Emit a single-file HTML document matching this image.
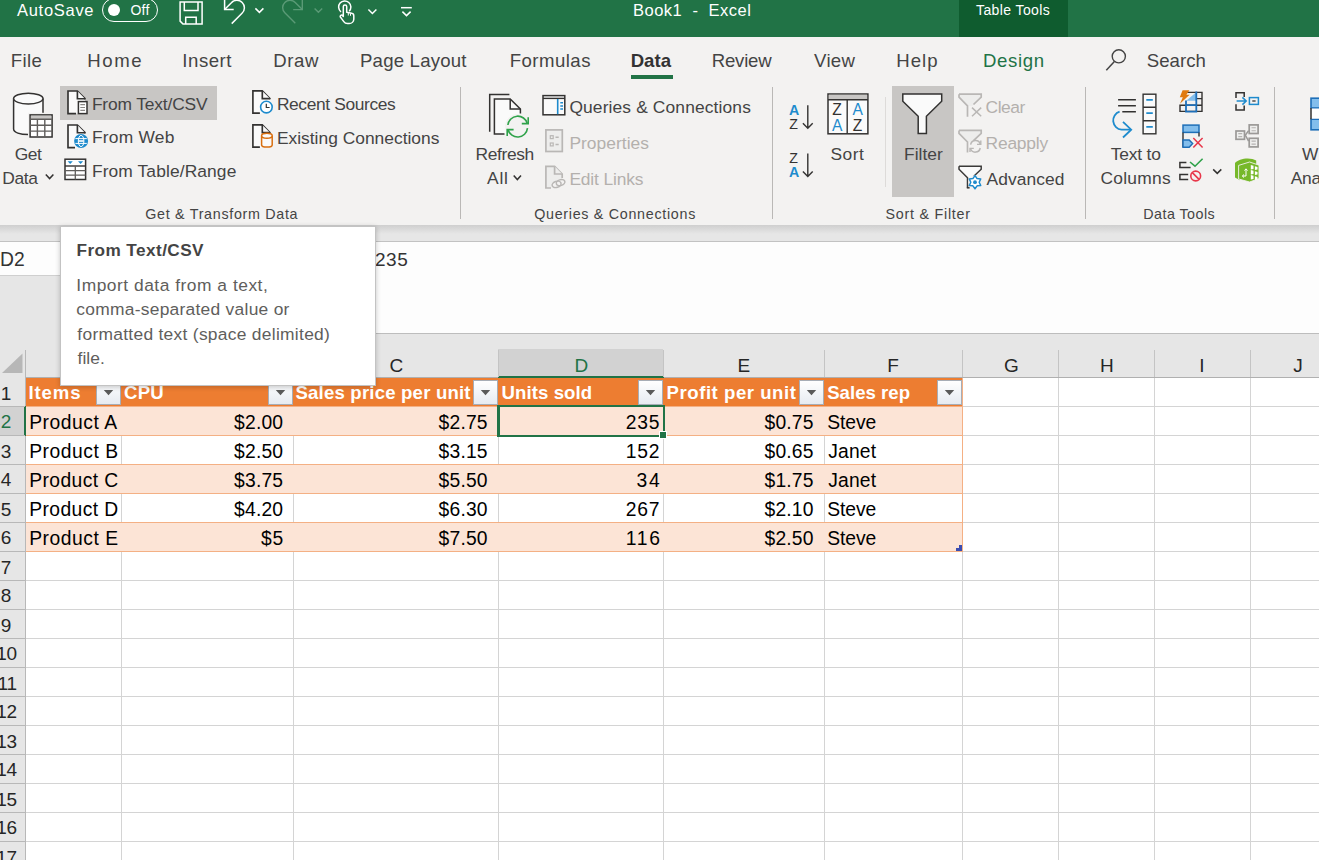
<!DOCTYPE html>
<html lang="en"><head><meta charset="utf-8"><title>Book1 - Excel</title>
<style>
html,body{margin:0;padding:0;}
body{width:1319px;height:860px;overflow:hidden;position:relative;background:#fff;font-family:"Liberation Sans", sans-serif;}
svg{position:absolute;overflow:visible;}
</style></head><body>
<div style="position:absolute;left:0px;top:0px;width:1319px;height:37px;background:#217346;"></div>
<div style="position:absolute;left:959px;top:0px;width:109px;height:37px;background:#0f5c2f;"></div>
<div style="position:absolute;left:102px;top:-2.5px;width:54.4px;height:22.3px;border:1.5px solid #fff;border-radius:13px"></div>
<div style="position:absolute;left:107.9px;top:3.8px;width:12.3px;height:12.3px;border-radius:50%;background:#fff"></div>
<svg style="left:0;top:0;" width="1319" height="37" viewBox="0 0 1319 37"><path d="M180.1 2.1 H202.1 V24 H183 L180.1 21.1 Z" stroke="#fff" fill="none" stroke-width="1.5"/><path d="M184.3 2.1 V10.4 H198 V2.1" stroke="#fff" fill="none" stroke-width="1.5"/><path d="M185.7 24 V17.3 H196.2 V24" stroke="#fff" fill="none" stroke-width="1.5"/><path d="M224.6 -2 V9.5 H233.7" stroke="#fff" fill="none" stroke-width="1.5"/><path d="M224.6 9.5 L231.4 2.7 A7.5 7.5 0 1 1 242 13.3 L231.7 23.6" stroke="#fff" fill="none" stroke-width="1.5"/><path d="M255.4 8.4 L259.4 12.4 L263.4 8.4" stroke="#fff" fill="none" stroke-width="1.5"/><path d="M302.3 -2 V9.6 H293.2" stroke="#5a9a76" fill="none" stroke-width="1.4"/><path d="M302.3 9.6 L295.2 2.5 A7.3 7.3 0 1 0 284.8 12.8 L295.3 23.3" stroke="#5a9a76" fill="none" stroke-width="1.4"/><path d="M314.6 8.4 L318.4 12.2 L322.2 8.4" stroke="#5a9a76" fill="none" stroke-width="1.4"/><path d="M341 11.8 A6.1 6.1 0 1 1 349.2 11.2" stroke="#fff" fill="none" stroke-width="1.5"/><path d="M343.3 16.5 V6.6 A1.7 1.7 0 0 1 346.7 6.6 V12.2 L351.7 13.3 A2.6 2.6 0 0 1 353.8 15.9 V19.2 A4.6 4.6 0 0 1 349.2 23.6 H347.5 A4.5 4.5 0 0 1 343.8 21.6 L340.2 16.8 A1.5 1.5 0 0 1 342.4 15.2 Z" stroke="#fff" fill="none" stroke-width="1.5" stroke-linejoin="round"/><path d="M348.3 13 V15.5 M350.5 13.5 V15.8" stroke="#fff" stroke-width="1" fill="none"/><path d="M368.4 9.5 L372.4 13.5 L376.4 9.5" stroke="#fff" fill="none" stroke-width="1.5"/><path d="M401 7.7 H411.8" stroke="#fff" fill="none" stroke-width="1.5"/><path d="M402.4 11.6 L406.5 15.6 L410.6 11.6" stroke="#fff" fill="none" stroke-width="1.5"/></svg>
<div style="position:absolute;left:0px;top:37px;width:1319px;height:188px;background:#f3f2f1;"></div>
<div style="position:absolute;left:630.7px;top:74.6px;width:42px;height:4.2px;background:#217346;"></div>
<div style="position:absolute;left:60px;top:86px;width:157px;height:34px;background:#c8c6c4;"></div>
<div style="position:absolute;left:892px;top:86px;width:62px;height:111px;background:#c8c6c4;"></div>
<div style="position:absolute;left:460px;top:87px;width:1px;height:132px;background:#bab8b6;"></div>
<div style="position:absolute;left:772px;top:87px;width:1px;height:132px;background:#bab8b6;"></div>
<div style="position:absolute;left:1085px;top:87px;width:1px;height:132px;background:#bab8b6;"></div>
<div style="position:absolute;left:1274px;top:87px;width:1px;height:132px;background:#bab8b6;"></div>
<div style="position:absolute;left:885px;top:96.5px;width:1px;height:90px;background:#dddbd9;"></div>
<svg style="left:0;top:0;" width="1319" height="230" viewBox="0 0 1319 230"><circle cx="1118.8" cy="56.3" r="6.6" stroke="#444" stroke-width="1.4" fill="none" /><path d="M1114.4 61.4 L1106.3 70.3" stroke="#444" stroke-width="1.5" fill="none" /><path d="M45.8 174.6 L49.599999999999994 178.6 L53.4 174.6" stroke="#333231" stroke-width="1.5" fill="none" /><path d="M513.7 175.4 L517.35 179.5 L521 175.4" stroke="#333231" stroke-width="1.5" fill="none" /><path d="M1213.2 169.4 L1217.25 173.4 L1221.3 169.4" stroke="#333231" stroke-width="1.5" fill="none" /><path d="M13.6 98.6 V129 C13.6 132.5 20 134.6 28.3 134.6 C36.6 134.6 43 132.5 43 129 V98.6" stroke="#333231" stroke-width="1.5" fill="#fafafa" /><ellipse cx="28.3" cy="98.6" rx="14.7" ry="5.4" stroke="#333231" stroke-width="1.5" fill="#fafafa" /><rect x="28" y="112.8" width="26.2" height="26.3" fill="#f3f2f1"/><rect x="30.1" y="114.9" width="22" height="22.1" stroke="#333231" stroke-width="1.5" fill="#fff" /><rect x="30.9" y="115.7" width="20.4" height="3.4" fill="#c8c6c4"/><path d="M30.1 119.3 H52.1 M30.1 125.2 H52.1 M30.1 131.1 H52.1 M37.4 119.3 V137 M44.8 119.3 V137" stroke="#605e5c" stroke-width="1.4" fill="none" /><path d="M68 91 H77.4 L85 98.7 V113.6 H68 Z" fill="#fafafa"/><path d="M76 113.6 H68 V91 H77.4 L85 98.7 V99.4" stroke="#333231" stroke-width="1.65" fill="#fafafa" /><path d="M77.4 91 V98.7 H85" stroke="#333231" stroke-width="1.65" fill="#fafafa" /><rect x="78.4" y="101.6" width="8.6" height="12" stroke="#333231" stroke-width="1.5" fill="#fff" /><path d="M80.3 104.6 H85 M80.3 107.5 H85 M80.3 110.4 H85" stroke="#8a8886" stroke-width="1.1" fill="none" /><path d="M68 125 H77.4 L85 132.7 V147.6 H68 Z" fill="#fafafa"/><path d="M75 147.6 H68 V125 H77.4 L85 132.7 V133.4" stroke="#333231" stroke-width="1.65" fill="#fafafa" /><path d="M77.4 125 V132.7 H85" stroke="#333231" stroke-width="1.65" fill="#fafafa" /><circle cx="81.1" cy="141" r="7" fill="#1e8bcd"/><ellipse cx="81.1" cy="141" rx="2.8" ry="5.6" stroke="#fff" stroke-width="1" fill="none" /><path d="M75.4 138.6 H86.8 M75.4 143.4 H86.8" stroke="#fff" stroke-width="1" fill="none" /><path d="M78.5 141 H83.7" stroke="#fff" stroke-width="1.6" fill="none" /><rect x="65" y="159.2" width="20.6" height="20.3" stroke="#333231" stroke-width="1.5" fill="#fff" /><path d="M65 166 H85.6" stroke="#333231" stroke-width="1.4" fill="none" /><path d="M65 170.7 H85.6 M65 175.1 H85.6 M75.3 166 V179.5" stroke="#605e5c" stroke-width="1.3" fill="none" /><path d="M67.6 161.3 H72.8 L70.2 164 Z M78 161.3 H83.2 L80.6 164 Z" fill="#1e8bcd"/><path d="M253.2 91.2 H262.6 L270.2 98.9 V113.6 H253.2 Z" fill="#fafafa"/><path d="M259.9 113.10000000000001 H252.9 V90.9 H262.3 L269.9 98.60000000000001 V99.30000000000001" stroke="#333231" stroke-width="1.65" fill="#fafafa" /><path d="M262.3 90.9 V98.60000000000001 H269.9" stroke="#333231" stroke-width="1.65" fill="#fafafa" /><circle cx="266.4" cy="107.1" r="5.8" stroke="#1e8bcd" stroke-width="1.6" fill="#fff" /><path d="M266.3 103.8 V107.5 H269.6" stroke="#333231" stroke-width="1.2" fill="none" /><path d="M253.2 125.2 H262.6 L270.2 132.9 V147.6 H253.2 Z" fill="#fafafa"/><path d="M259.9 147.1 H252.9 V124.9 H262.3 L269.9 132.6 V133.3" stroke="#333231" stroke-width="1.65" fill="#fafafa" /><path d="M262.3 124.9 V132.6 H269.9" stroke="#333231" stroke-width="1.65" fill="#fafafa" /><path d="M261.6 135.8 V145 C261.6 146.4 264 147.1 266.9 147.1 C269.8 147.1 272.2 146.4 272.2 145 V135.8" stroke="#d86f10" stroke-width="1.5" fill="#fafafa" /><ellipse cx="266.9" cy="135.8" rx="5.3" ry="2.5" stroke="#d86f10" stroke-width="1.5" fill="#fafafa" /><path d="M509.4 94.4 H489.7 V131.8" stroke="#333231" stroke-width="1.5" fill="none" /><path d="M494.4 98.9 H510.2 L520.4 109 V134 H494.4 Z" fill="#fafafa"/><path d="M504.5 134 H494.4 V98.9 H510.2 L520.4 109 V113.5" stroke="#333231" stroke-width="1.5" fill="none" /><path d="M510.2 98.9 V109 H520.4" stroke="#333231" stroke-width="1.5" fill="none" /><circle cx="517.7" cy="126.6" r="12.6" fill="#f3f2f1"/><path d="M507.9 125 A9.9 9.9 0 0 1 527.3 123.5" stroke="#2fa24a" stroke-width="1.6" fill="none" /><path d="M528.2 117.2 V123.6 H521.8" stroke="#2fa24a" stroke-width="1.6" fill="none" /><path d="M527.5 128.2 A9.9 9.9 0 0 1 508.1 129.7" stroke="#2fa24a" stroke-width="1.6" fill="none" /><path d="M507.2 136 V129.6 H513.6" stroke="#2fa24a" stroke-width="1.6" fill="none" /><rect x="543" y="95.6" width="21.8" height="19.2" stroke="#333231" stroke-width="1.5" fill="#fafafa" /><path d="M543 98.4 H564.8" stroke="#333231" stroke-width="1.4" fill="none" /><path d="M557.7 99 V114.2" stroke="#1e8bcd" stroke-width="1.6" fill="none" /><path d="M560.3 102.8 H563 M560.3 105.9 H563 M560.3 109 H563" stroke="#1e8bcd" stroke-width="1.5" fill="none" /><rect x="545.9" y="129.9" width="16.4" height="21.6" stroke="#b9b7b5" stroke-width="1.7" fill="#ededec" /><rect x="550.3" y="135.7" width="2.9" height="2.9" stroke="#b9b7b5" stroke-width="1.2" fill="none" /><rect x="550.3" y="143" width="2.9" height="2.9" stroke="#b9b7b5" stroke-width="1.2" fill="none" /><path d="M555.5 137.2 H558.7 M555.5 144.5 H558.7" stroke="#b9b7b5" stroke-width="1.4" fill="none" /><path d="M551 188 H545.9 V166.3 H554.6 L562.2 174 V178" stroke="#b9b7b5" stroke-width="1.7" fill="#ededec" /><path d="M554.6 166.3 V174 H562.2" stroke="#b9b7b5" stroke-width="1.7" fill="#ededec" /><ellipse cx="556.6" cy="184.4" rx="4.6" ry="3" transform="rotate(-18 556.6 184.4)" stroke="#b9b7b5" stroke-width="1.5" fill="#f3f2f1" /><ellipse cx="560.6" cy="182.6" rx="4.4" ry="2.9" transform="rotate(-18 560.6 182.6)" stroke="#b9b7b5" stroke-width="1.5" fill="none" /><path d="M807.8 105.2 V128.6 M802.9 123.3 L807.8 128.29999999999998 L812.6999999999999 123.3" stroke="#333231" stroke-width="1.4" fill="none" /><path d="M807.8 153.4 V176.8 M802.9 171.5 L807.8 176.5 L812.6999999999999 171.5" stroke="#333231" stroke-width="1.4" fill="none" /><text x="794.2" y="115.4" font-family="Liberation Sans, sans-serif" font-size="14.2" font-weight="bold" fill="#1e8bcd" text-anchor="middle">A</text><text x="793.6" y="128.7" font-family="Liberation Sans, sans-serif" font-size="14.2" font-weight="normal" fill="#333231" text-anchor="middle">Z</text><text x="793.6" y="163.4" font-family="Liberation Sans, sans-serif" font-size="14.2" font-weight="normal" fill="#333231" text-anchor="middle">Z</text><text x="794.2" y="176.8" font-family="Liberation Sans, sans-serif" font-size="14.2" font-weight="bold" fill="#1e8bcd" text-anchor="middle">A</text><rect x="828" y="94" width="39.9" height="39.8" stroke="#333231" stroke-width="1.5" fill="#fafafa" /><rect x="828.8" y="94.8" width="38.3" height="4.6" fill="#c8c6c4"/><path d="M828 99.8 H867.9 M847.2 99.8 V133.8" stroke="#333231" stroke-width="1.4" fill="none" /><text x="837.1" y="115" font-family="Liberation Sans, sans-serif" font-size="15.6" font-weight="normal" fill="#333231" text-anchor="middle">Z</text><text x="837.1" y="130.7" font-family="Liberation Sans, sans-serif" font-size="15.6" font-weight="normal" fill="#1e8bcd" text-anchor="middle">A</text><text x="857.6" y="115" font-family="Liberation Sans, sans-serif" font-size="15.6" font-weight="normal" fill="#1e8bcd" text-anchor="middle">A</text><text x="857.6" y="130.7" font-family="Liberation Sans, sans-serif" font-size="15.6" font-weight="normal" fill="#333231" text-anchor="middle">Z</text><path d="M902.8 94 H941.7 V101.3 L926.4 116.3 V133.6 H918.2 V116.3 L902.8 101.3 Z" stroke="#323130" stroke-width="1.5" fill="#fafafa" /><path d="M959 94.2 H981.2 V97.2 L972 106 H967.5 L959 97.2 Z" fill="#ededec"/><path d="M959 94.2 H981.2 V97.2 L973.5 104.5 M967.5 116.7 V105.8 L959 97.2 V94.2" stroke="#b9b7b5" stroke-width="1.7" fill="none" /><path d="M972 107.6 L981.2 116.2 M981.2 107.6 L972 116.2" stroke="#b9b7b5" stroke-width="1.5" fill="none" /><path d="M959 130.4 H981.2 V133.4 L972 142 H967.5 L959 133.4 Z" fill="#ededec"/><path d="M959 130.4 H981.2 V133.4 L973.5 140.70000000000002 M967.5 152.4 V142.0 L959 133.4 V130.4" stroke="#b9b7b5" stroke-width="1.7" fill="none" /><path d="M970.6 144.6 A5 5 0 0 1 980.3 144.2 M980.2 148 A5 5 0 0 1 970.5 148.6" stroke="#b9b7b5" stroke-width="1.5" fill="none" /><path d="M980.8 140.6 V144.4 H977 M970 152 V148.4 H973.8" stroke="#b9b7b5" stroke-width="1.4" fill="none" /><path d="M959 166.2 H981.2 V169.2 L972 178 H967.5 L959 169.2 Z" fill="#fafafa"/><path d="M959 166.2 H981.2 V169.2 L973.5 176.5 M967.5 187.79999999999998 V177.79999999999998 L959 169.2 V166.2" stroke="#3b3a39" stroke-width="1.5" fill="none" /><path d="M966.8 187.8 H969.6" stroke="#323130" stroke-width="1.5" fill="none" /><circle cx="975.3" cy="182.2" r="7" fill="#f3f2f1"/><polygon points="975.00,175.60 977.10,178.56 980.72,178.90 979.20,182.20 980.72,185.50 977.10,185.84 975.00,188.80 972.90,185.84 969.28,185.50 970.80,182.20 969.28,178.90 972.90,178.56" stroke="#1e8bcd" stroke-width="1.5" fill="#fff" stroke-linejoin='round'/><circle cx="975" cy="182.2" r="1.9" fill="#1e8bcd"/><path d="M1118.1 99.8 H1135.9 M1118.1 105.8 H1135.9 M1122.3 111.8 H1135.9" stroke="#333231" stroke-width="1.5" fill="none" /><rect x="1143.1" y="94.2" width="12.8" height="39.6" stroke="#333231" stroke-width="1.4" fill="#fafafa" /><path d="M1143.1 107.3 H1155.9 M1143.1 120.7 H1155.9" stroke="#333231" stroke-width="1.4" fill="none" /><path d="M1146.3 99.9 H1152.8 M1146.3 113.1 H1152.8 M1146.3 126.9 H1152.8" stroke="#1e8bcd" stroke-width="1.6" fill="none" /><path d="M1119.6 111.6 A9.3 9.3 0 0 0 1121.6 129.7 H1131" stroke="#1e8bcd" stroke-width="1.8" fill="none" /><path d="M1123 121.8 L1131.2 129.7 L1123 137.5" stroke="#1e8bcd" stroke-width="1.8" fill="none" /><path d="M1186 92.4 H1202 V111.4 H1180 V105.2 H1202 M1202 98.6 H1196.4 M1180 105.2 V111.4" stroke="#333231" stroke-width="1.4" fill="none" /><path d="M1196.3 92.2 L1186.2 100.8 H1196.3 Z" fill="#83beec"/><path d="M1196.3 91.6 V111.6 H1186 V100.6 M1186 105.2 H1196.3" stroke="#1e6fb8" stroke-width="1.8" fill="none" /><path d="M1182.6 90.2 H1189.4 L1186.4 94.8 H1189.6 L1180 103.8 L1182.8 97.2 H1179.8 Z" fill="#e07a10"/><rect x="1183" y="125.1" width="16" height="7.3" stroke="#1e6fb8" stroke-width="1.5" fill="#83beec" /><path d="M1183 132.4 V147.2 M1199 132.4 V136.5" stroke="#333231" stroke-width="1.4" fill="none" /><path d="M1183 140 H1189.2 L1192.6 143.6 L1189.2 147.2 H1183 Z" stroke="#1e6fb8" stroke-width="1.5" fill="#83beec" /><path d="M1193.3 138 L1202.6 147.6 M1202.6 138 L1193.3 147.6" stroke="#e8374a" stroke-width="1.5" fill="none" /><path d="M1186.4 162.4 H1179.9 V167.6 H1190.6 M1188.2 174.4 H1179.9 V179.6 H1188.2" stroke="#333231" stroke-width="1.5" fill="none" /><path d="M1190 162 L1195 166.2 L1202.6 158.8" stroke="#2fa24a" stroke-width="1.6" fill="none" /><circle cx="1195.7" cy="176" r="4.9" stroke="#e8374a" stroke-width="1.6" fill="none" /><path d="M1192.3 172.6 L1199.1 179.4" stroke="#e8374a" stroke-width="1.6" fill="none" /><path d="M1236 98 V92.8 H1244.2 V97 M1236 104.2 V110 H1244.2 V105.4" stroke="#333231" stroke-width="1.5" fill="none" /><path d="M1236.6 101 H1246 M1242.4 97.4 L1246.2 101 L1242.4 104.6" stroke="#1e8bcd" stroke-width="1.5" fill="none" /><rect x="1249.4" y="97.6" width="9" height="6.8" stroke="#1e8bcd" stroke-width="1.5" fill="none" /><path d="M1252.3 101 H1255.6" stroke="#333231" stroke-width="1.3" fill="none" /><path d="M1245.3 135.2 L1248.6 130.6 M1245.3 135.2 L1248.6 141.2" stroke="#9b9997" stroke-width="1.5" fill="none" /><rect x="1236" y="131" width="8.5" height="8.3" stroke="#9b9997" stroke-width="1.7" fill="#efefee" /><path d="M1238.3 133.65 H1242.2 M1238.3 136.65 H1242.2" stroke="#b5b3b1" stroke-width="1.1" fill="none" /><rect x="1249.2" y="124.9" width="8.9" height="8.6" stroke="#9b9997" stroke-width="1.7" fill="#efefee" /><path d="M1251.5 127.70000000000002 H1255.8000000000002 M1251.5 130.70000000000002 H1255.8000000000002" stroke="#b5b3b1" stroke-width="1.1" fill="none" /><rect x="1249.2" y="138.3" width="8.9" height="8.6" stroke="#9b9997" stroke-width="1.7" fill="#efefee" /><path d="M1251.5 141.10000000000002 H1255.8000000000002 M1251.5 144.10000000000002 H1255.8000000000002" stroke="#b5b3b1" stroke-width="1.1" fill="none" /><path d="M1235 163 C1238.5 158.4 1250.5 156.6 1256.2 160.6 V165 H1240 V180.2 L1235 177.6 Z" fill="#76b82a"/><path d="M1238.6 165.4 L1249.6 162 L1259 165.2 V178.6 L1249.6 182 L1238.6 179 Z" fill="#76b82a" stroke="#f3f2f1" stroke-width="0.9"/><path d="M1250.8 165.0 l2.7 0.8 v3.1 l-2.7 0.5 z M1254.9 166.2 l2.6 0.7 v2.7 l-2.6 0.5 z M1250.8 170.0 l2.7 0.8 v3.1 l-2.7 0.5 z M1254.9 171.2 l2.6 0.7 v2.7 l-2.6 0.5 z M1250.8 175.0 l2.7 0.8 v3.1 l-2.7 0.5 z M1254.9 176.2 l2.6 0.7 v2.7 l-2.6 0.5 z " fill="#fff"/><path d="M1242.6 176 H1246 V169 M1244.5 170.6 L1246 168.8 L1247.5 170.6 M1244 174.5 L1242.3 176 L1244 177.5" stroke="#fff" stroke-width="1" fill="none" /><rect x="1311" y="98.2" width="14" height="9.8" stroke="#1e6fb8" stroke-width="1.6" fill="#83beec" /><rect x="1311" y="119.2" width="14" height="10.6" stroke="#1e6fb8" stroke-width="1.6" fill="#83beec" /><rect x="1311" y="108.6" width="14" height="10" fill="#fff"/><path d="M1311 108 V119.2" stroke="#333231" stroke-width="1.5" fill="none" /></svg>
<div style="position:absolute;left:0px;top:225px;width:1319px;height:152px;background:#e6e6e6;"></div>
<div style="position:absolute;left:0;top:225px;width:1319px;height:9px;background:linear-gradient(#cfcfcf,#e6e6e6)"></div>
<div style="position:absolute;left:0px;top:241px;width:140px;height:35px;background:#fdfdfd;border-top:1px solid #c2c2c2;border-bottom:1px solid #cfcfcf;box-sizing:border-box"></div>
<div style="position:absolute;left:300px;top:241px;width:1019px;height:93px;background:#fdfdfd;border-top:1px solid #c2c2c2;border-bottom:1px solid #bdbdbd;box-sizing:border-box"></div>
<div style="position:absolute;left:25px;top:377px;width:1294px;height:483px;background:#fff;"></div>
<div style="position:absolute;left:498px;top:349px;width:165px;height:27px;background:#d2d2d2;"></div>
<div style="position:absolute;left:498px;top:376px;width:166px;height:2px;background:#217346;"></div>
<div style="position:absolute;left:121px;top:350px;width:1px;height:27px;background:#c4c4c4;"></div>
<div style="position:absolute;left:293px;top:350px;width:1px;height:27px;background:#c4c4c4;"></div>
<div style="position:absolute;left:498px;top:350px;width:1px;height:27px;background:#c4c4c4;"></div>
<div style="position:absolute;left:663px;top:350px;width:1px;height:27px;background:#c4c4c4;"></div>
<div style="position:absolute;left:824px;top:350px;width:1px;height:27px;background:#c4c4c4;"></div>
<div style="position:absolute;left:962px;top:350px;width:1px;height:27px;background:#c4c4c4;"></div>
<div style="position:absolute;left:1058px;top:350px;width:1px;height:27px;background:#c4c4c4;"></div>
<div style="position:absolute;left:1154px;top:350px;width:1px;height:27px;background:#c4c4c4;"></div>
<div style="position:absolute;left:1250px;top:350px;width:1px;height:27px;background:#c4c4c4;"></div>
<div style="position:absolute;left:0px;top:377px;width:498px;height:1px;background:#b0b0b0;"></div>
<div style="position:absolute;left:664px;top:377px;width:700px;height:1px;background:#b0b0b0;"></div>
<svg style="left:0;top:349px" width="25" height="28"><polygon points="22.5,4.5 22.5,24 2,24" fill="#b7b7b7"/></svg>
<div style="position:absolute;left:0px;top:377px;width:25px;height:483px;background:#e6e6e6;"></div>
<div style="position:absolute;left:0px;top:406px;width:25px;height:29px;background:#d2d2d2;"></div>
<div style="position:absolute;left:25px;top:350px;width:1px;height:510px;background:#b8b8b8;"></div>
<div style="position:absolute;left:24px;top:406px;width:2px;height:30px;background:#217346;"></div>
<div style="position:absolute;left:0px;top:406px;width:25px;height:1px;background:#b8b8b8;"></div>
<div style="position:absolute;left:0px;top:435px;width:25px;height:1px;background:#b8b8b8;"></div>
<div style="position:absolute;left:0px;top:464px;width:25px;height:1px;background:#b8b8b8;"></div>
<div style="position:absolute;left:0px;top:493px;width:25px;height:1px;background:#b8b8b8;"></div>
<div style="position:absolute;left:0px;top:522px;width:25px;height:1px;background:#b8b8b8;"></div>
<div style="position:absolute;left:0px;top:551px;width:25px;height:1px;background:#b8b8b8;"></div>
<div style="position:absolute;left:0px;top:580px;width:25px;height:1px;background:#b8b8b8;"></div>
<div style="position:absolute;left:0px;top:609px;width:25px;height:1px;background:#b8b8b8;"></div>
<div style="position:absolute;left:0px;top:638px;width:25px;height:1px;background:#b8b8b8;"></div>
<div style="position:absolute;left:0px;top:667px;width:25px;height:1px;background:#b8b8b8;"></div>
<div style="position:absolute;left:0px;top:696px;width:25px;height:1px;background:#b8b8b8;"></div>
<div style="position:absolute;left:0px;top:725px;width:25px;height:1px;background:#b8b8b8;"></div>
<div style="position:absolute;left:0px;top:754px;width:25px;height:1px;background:#b8b8b8;"></div>
<div style="position:absolute;left:0px;top:783px;width:25px;height:1px;background:#b8b8b8;"></div>
<div style="position:absolute;left:0px;top:812px;width:25px;height:1px;background:#b8b8b8;"></div>
<div style="position:absolute;left:0px;top:841px;width:25px;height:1px;background:#b8b8b8;"></div>
<div style="position:absolute;left:0px;top:870px;width:25px;height:1px;background:#b8b8b8;"></div>
<div style="position:absolute;left:26px;top:406px;width:1293px;height:1px;background:#d4d4d4;"></div>
<div style="position:absolute;left:26px;top:435px;width:1293px;height:1px;background:#d4d4d4;"></div>
<div style="position:absolute;left:26px;top:464px;width:1293px;height:1px;background:#d4d4d4;"></div>
<div style="position:absolute;left:26px;top:493px;width:1293px;height:1px;background:#d4d4d4;"></div>
<div style="position:absolute;left:26px;top:522px;width:1293px;height:1px;background:#d4d4d4;"></div>
<div style="position:absolute;left:26px;top:551px;width:1293px;height:1px;background:#d4d4d4;"></div>
<div style="position:absolute;left:26px;top:580px;width:1293px;height:1px;background:#d4d4d4;"></div>
<div style="position:absolute;left:26px;top:609px;width:1293px;height:1px;background:#d4d4d4;"></div>
<div style="position:absolute;left:26px;top:638px;width:1293px;height:1px;background:#d4d4d4;"></div>
<div style="position:absolute;left:26px;top:667px;width:1293px;height:1px;background:#d4d4d4;"></div>
<div style="position:absolute;left:26px;top:696px;width:1293px;height:1px;background:#d4d4d4;"></div>
<div style="position:absolute;left:26px;top:725px;width:1293px;height:1px;background:#d4d4d4;"></div>
<div style="position:absolute;left:26px;top:754px;width:1293px;height:1px;background:#d4d4d4;"></div>
<div style="position:absolute;left:26px;top:783px;width:1293px;height:1px;background:#d4d4d4;"></div>
<div style="position:absolute;left:26px;top:812px;width:1293px;height:1px;background:#d4d4d4;"></div>
<div style="position:absolute;left:26px;top:841px;width:1293px;height:1px;background:#d4d4d4;"></div>
<div style="position:absolute;left:26px;top:870px;width:1293px;height:1px;background:#d4d4d4;"></div>
<div style="position:absolute;left:121px;top:378px;width:1px;height:482px;background:#d4d4d4;"></div>
<div style="position:absolute;left:293px;top:378px;width:1px;height:482px;background:#d4d4d4;"></div>
<div style="position:absolute;left:498px;top:378px;width:1px;height:482px;background:#d4d4d4;"></div>
<div style="position:absolute;left:663px;top:378px;width:1px;height:482px;background:#d4d4d4;"></div>
<div style="position:absolute;left:824px;top:378px;width:1px;height:482px;background:#d4d4d4;"></div>
<div style="position:absolute;left:962px;top:378px;width:1px;height:482px;background:#d4d4d4;"></div>
<div style="position:absolute;left:1058px;top:378px;width:1px;height:482px;background:#d4d4d4;"></div>
<div style="position:absolute;left:1154px;top:378px;width:1px;height:482px;background:#d4d4d4;"></div>
<div style="position:absolute;left:1250px;top:378px;width:1px;height:482px;background:#d4d4d4;"></div>
<div style="position:absolute;left:26px;top:378px;width:936px;height:28px;background:#ed7d31;"></div>
<div style="position:absolute;left:26px;top:407px;width:936px;height:28px;background:#fce4d6;"></div>
<div style="position:absolute;left:26px;top:465px;width:936px;height:28px;background:#fce4d6;"></div>
<div style="position:absolute;left:26px;top:523px;width:936px;height:28px;background:#fce4d6;"></div>
<div style="position:absolute;left:26px;top:406px;width:937px;height:1px;background:#f4b084;"></div>
<div style="position:absolute;left:26px;top:435px;width:937px;height:1px;background:#f4b084;"></div>
<div style="position:absolute;left:26px;top:464px;width:937px;height:1px;background:#f4b084;"></div>
<div style="position:absolute;left:26px;top:493px;width:937px;height:1px;background:#f4b084;"></div>
<div style="position:absolute;left:26px;top:522px;width:937px;height:1px;background:#f4b084;"></div>
<div style="position:absolute;left:26px;top:551px;width:937px;height:1px;background:#f4b084;"></div>
<div style="position:absolute;left:962px;top:378px;width:1px;height:174px;background:#f4b084;"></div>
<div style="position:absolute;left:96px;top:380px;width:25px;height:25px;box-sizing:border-box;border:1px solid #a7adb6;background:linear-gradient(#ffffff,#f4f6f9 45%,#e7ebf1)"></div>
<svg style="left:96px;top:380px" width="25" height="25"><polygon points="7.8,9.9 17.2,9.9 12.5,15.3" fill="#5a5a5a"/></svg>
<div style="position:absolute;left:268px;top:380px;width:25px;height:25px;box-sizing:border-box;border:1px solid #a7adb6;background:linear-gradient(#ffffff,#f4f6f9 45%,#e7ebf1)"></div>
<svg style="left:268px;top:380px" width="25" height="25"><polygon points="7.8,9.9 17.2,9.9 12.5,15.3" fill="#5a5a5a"/></svg>
<div style="position:absolute;left:473px;top:380px;width:25px;height:25px;box-sizing:border-box;border:1px solid #a7adb6;background:linear-gradient(#ffffff,#f4f6f9 45%,#e7ebf1)"></div>
<svg style="left:473px;top:380px" width="25" height="25"><polygon points="7.8,9.9 17.2,9.9 12.5,15.3" fill="#5a5a5a"/></svg>
<div style="position:absolute;left:638px;top:380px;width:25px;height:25px;box-sizing:border-box;border:1px solid #a7adb6;background:linear-gradient(#ffffff,#f4f6f9 45%,#e7ebf1)"></div>
<svg style="left:638px;top:380px" width="25" height="25"><polygon points="7.8,9.9 17.2,9.9 12.5,15.3" fill="#5a5a5a"/></svg>
<div style="position:absolute;left:799px;top:380px;width:25px;height:25px;box-sizing:border-box;border:1px solid #a7adb6;background:linear-gradient(#ffffff,#f4f6f9 45%,#e7ebf1)"></div>
<svg style="left:799px;top:380px" width="25" height="25"><polygon points="7.8,9.9 17.2,9.9 12.5,15.3" fill="#5a5a5a"/></svg>
<div style="position:absolute;left:937px;top:380px;width:25px;height:25px;box-sizing:border-box;border:1px solid #a7adb6;background:linear-gradient(#ffffff,#f4f6f9 45%,#e7ebf1)"></div>
<svg style="left:937px;top:380px" width="25" height="25"><polygon points="7.8,9.9 17.2,9.9 12.5,15.3" fill="#5a5a5a"/></svg>
<div style="position:absolute;left:497px;top:405px;width:168px;height:32px;box-sizing:border-box;border:2px solid #217346;border-left-width:3px"></div>
<div style="position:absolute;left:659px;top:431px;width:8px;height:8px;background:#fff;"></div>
<div style="position:absolute;left:660px;top:432px;width:6px;height:6px;background:#217346;"></div>
<div style="position:absolute;left:959px;top:545px;width:3px;height:6px;background:#3b4db1;"></div>
<div style="position:absolute;left:956px;top:548px;width:6px;height:3px;background:#3b4db1;"></div>
<div style="position:absolute;left:60.3px;top:226.3px;width:316px;height:159.5px;box-sizing:border-box;background:#fff;border:1px solid #c3c3c3;box-shadow:0 1px 5px rgba(0,0,0,.22);z-index:10"></div>
<div style="position:absolute;left:17.00px;top:1px;font-size:16.5px;line-height:18px;color:#fff;font-weight:normal;letter-spacing:0.714px;white-space:pre;">AutoSave</div>
<div style="position:absolute;left:130.40px;top:2px;font-size:14px;line-height:16px;color:#fff;font-weight:normal;letter-spacing:0.250px;white-space:pre;">Off</div>
<div style="position:absolute;left:633.00px;top:1px;font-size:16.5px;line-height:18px;color:#fff;font-weight:normal;letter-spacing:0.500px;white-space:pre;">Book1  -  Excel</div>
<div style="position:absolute;left:976.00px;top:2px;font-size:14px;line-height:16px;color:#fff;font-weight:normal;letter-spacing:0.400px;white-space:pre;">Table Tools</div>
<div style="position:absolute;left:10.70px;top:50px;font-size:18.6px;line-height:21px;color:#444;font-weight:normal;letter-spacing:0.433px;white-space:pre;">File</div>
<div style="position:absolute;left:87.30px;top:50px;font-size:18.6px;line-height:21px;color:#444;font-weight:normal;letter-spacing:1.567px;white-space:pre;">Home</div>
<div style="position:absolute;left:182.30px;top:50px;font-size:18.6px;line-height:21px;color:#444;font-weight:normal;letter-spacing:0.540px;white-space:pre;">Insert</div>
<div style="position:absolute;left:273.30px;top:50px;font-size:18.6px;line-height:21px;color:#444;font-weight:normal;letter-spacing:0.567px;white-space:pre;">Draw</div>
<div style="position:absolute;left:360.00px;top:50px;font-size:18.6px;line-height:21px;color:#444;font-weight:normal;letter-spacing:0.200px;white-space:pre;">Page Layout</div>
<div style="position:absolute;left:509.70px;top:50px;font-size:18.6px;line-height:21px;color:#444;font-weight:normal;letter-spacing:0.471px;white-space:pre;">Formulas</div>
<div style="position:absolute;left:711.70px;top:50px;font-size:18.6px;line-height:21px;color:#444;font-weight:normal;letter-spacing:-0.200px;white-space:pre;">Review</div>
<div style="position:absolute;left:814.00px;top:50px;font-size:18.6px;line-height:21px;color:#444;font-weight:normal;letter-spacing:0.333px;white-space:pre;">View</div>
<div style="position:absolute;left:896.30px;top:50px;font-size:18.6px;line-height:21px;color:#444;font-weight:normal;letter-spacing:1.000px;white-space:pre;">Help</div>
<div style="position:absolute;left:630.70px;top:50px;font-size:18.6px;line-height:21px;color:#333;font-weight:bold;letter-spacing:0.000px;white-space:pre;">Data</div>
<div style="position:absolute;left:983.00px;top:50px;font-size:18.6px;line-height:21px;color:#217346;font-weight:normal;letter-spacing:0.660px;white-space:pre;">Design</div>
<div style="position:absolute;left:1146.70px;top:50px;font-size:18.6px;line-height:21px;color:#444;font-weight:normal;letter-spacing:0.060px;white-space:pre;">Search</div>
<div style="position:absolute;left:91.90px;top:94px;font-size:17.4px;line-height:20px;color:#444;font-weight:normal;letter-spacing:-0.158px;white-space:pre;">From Text/CSV</div>
<div style="position:absolute;left:91.90px;top:127px;font-size:17.4px;line-height:20px;color:#444;font-weight:normal;letter-spacing:0.243px;white-space:pre;">From Web</div>
<div style="position:absolute;left:91.90px;top:161px;font-size:17.4px;line-height:20px;color:#444;font-weight:normal;letter-spacing:0.113px;white-space:pre;">From Table/Range</div>
<div style="position:absolute;left:14.70px;top:144px;font-size:17.4px;line-height:20px;color:#444;font-weight:normal;letter-spacing:-0.400px;white-space:pre;">Get</div>
<div style="position:absolute;left:2.30px;top:168px;font-size:17.4px;line-height:20px;color:#444;font-weight:normal;letter-spacing:-0.367px;white-space:pre;">Data</div>
<div style="position:absolute;left:276.90px;top:94px;font-size:17.4px;line-height:20px;color:#444;font-weight:normal;letter-spacing:-0.377px;white-space:pre;">Recent Sources</div>
<div style="position:absolute;left:276.90px;top:128px;font-size:17.4px;line-height:20px;color:#444;font-weight:normal;letter-spacing:0.005px;white-space:pre;">Existing Connections</div>
<div style="position:absolute;left:145.30px;top:206px;font-size:14.3px;line-height:16px;color:#444;font-weight:normal;letter-spacing:0.695px;white-space:pre;">Get &amp; Transform Data</div>
<div style="position:absolute;left:475.50px;top:144px;font-size:17.4px;line-height:20px;color:#444;font-weight:normal;letter-spacing:-0.367px;white-space:pre;">Refresh</div>
<div style="position:absolute;left:487.00px;top:168px;font-size:17.4px;line-height:20px;color:#444;font-weight:normal;letter-spacing:0.800px;white-space:pre;">All</div>
<div style="position:absolute;left:569.40px;top:97px;font-size:17.4px;line-height:20px;color:#444;font-weight:normal;letter-spacing:0.130px;white-space:pre;">Queries &amp; Connections</div>
<div style="position:absolute;left:569.40px;top:133px;font-size:17.4px;line-height:20px;color:#b3b0ad;font-weight:normal;letter-spacing:0.033px;white-space:pre;">Properties</div>
<div style="position:absolute;left:569.40px;top:169px;font-size:17.4px;line-height:20px;color:#b3b0ad;font-weight:normal;letter-spacing:-0.156px;white-space:pre;">Edit Links</div>
<div style="position:absolute;left:534.20px;top:206px;font-size:14.3px;line-height:16px;color:#444;font-weight:normal;letter-spacing:0.705px;white-space:pre;">Queries &amp; Connections</div>
<div style="position:absolute;left:830.40px;top:144px;font-size:17.4px;line-height:20px;color:#444;font-weight:normal;letter-spacing:0.533px;white-space:pre;">Sort</div>
<div style="position:absolute;left:904.00px;top:144px;font-size:17.4px;line-height:20px;color:#444;font-weight:normal;letter-spacing:0.040px;white-space:pre;">Filter</div>
<div style="position:absolute;left:985.60px;top:97px;font-size:17.4px;line-height:20px;color:#b3b0ad;font-weight:normal;letter-spacing:-0.475px;white-space:pre;">Clear</div>
<div style="position:absolute;left:985.60px;top:133px;font-size:17.4px;line-height:20px;color:#b3b0ad;font-weight:normal;letter-spacing:-0.217px;white-space:pre;">Reapply</div>
<div style="position:absolute;left:986.60px;top:169px;font-size:17.4px;line-height:20px;color:#444;font-weight:normal;letter-spacing:0.057px;white-space:pre;">Advanced</div>
<div style="position:absolute;left:885.40px;top:206px;font-size:14.3px;line-height:16px;color:#444;font-weight:normal;letter-spacing:0.767px;white-space:pre;">Sort &amp; Filter</div>
<div style="position:absolute;left:1110.80px;top:144px;font-size:17.4px;line-height:20px;color:#444;font-weight:normal;letter-spacing:-0.200px;white-space:pre;">Text to</div>
<div style="position:absolute;left:1100.40px;top:168px;font-size:17.4px;line-height:20px;color:#444;font-weight:normal;letter-spacing:0.267px;white-space:pre;">Columns</div>
<div style="position:absolute;left:1143.30px;top:206px;font-size:14.3px;line-height:16px;color:#444;font-weight:normal;letter-spacing:0.456px;white-space:pre;">Data Tools</div>
<div style="position:absolute;left:1302.00px;top:144px;font-size:17.4px;line-height:20px;color:#444;font-weight:normal;letter-spacing:0.333px;white-space:pre;">What-If</div>
<div style="position:absolute;left:1290.70px;top:168px;font-size:17.4px;line-height:20px;color:#444;font-weight:normal;letter-spacing:-0.243px;white-space:pre;">Analysis</div>
<div style="position:absolute;left:0.10px;top:249px;font-size:19.3px;line-height:21px;color:#333;font-weight:normal;letter-spacing:-0.100px;white-space:pre;">D2</div>
<div style="position:absolute;left:375.00px;top:249px;font-size:19px;line-height:21px;color:#333;font-weight:normal;letter-spacing:0.500px;white-space:pre;">235</div>
<div style="position:absolute;left:67.00px;top:355px;font-size:19px;line-height:21px;color:#262626;font-weight:normal;white-space:pre;width:12px;text-align:center;">A</div>
<div style="position:absolute;left:201.00px;top:355px;font-size:19px;line-height:21px;color:#262626;font-weight:normal;white-space:pre;width:12px;text-align:center;">B</div>
<div style="position:absolute;left:389.50px;top:355px;font-size:19px;line-height:21px;color:#262626;font-weight:normal;white-space:pre;width:12px;text-align:center;">C</div>
<div style="position:absolute;left:574.50px;top:355px;font-size:19px;line-height:21px;color:#217346;font-weight:normal;white-space:pre;width:12px;text-align:center;">D</div>
<div style="position:absolute;left:737.50px;top:355px;font-size:19px;line-height:21px;color:#262626;font-weight:normal;white-space:pre;width:12px;text-align:center;">E</div>
<div style="position:absolute;left:887.00px;top:355px;font-size:19px;line-height:21px;color:#262626;font-weight:normal;white-space:pre;width:12px;text-align:center;">F</div>
<div style="position:absolute;left:1004.00px;top:355px;font-size:19px;line-height:21px;color:#262626;font-weight:normal;white-space:pre;width:12px;text-align:center;">G</div>
<div style="position:absolute;left:1100.00px;top:355px;font-size:19px;line-height:21px;color:#262626;font-weight:normal;white-space:pre;width:12px;text-align:center;">H</div>
<div style="position:absolute;left:1196.00px;top:355px;font-size:19px;line-height:21px;color:#262626;font-weight:normal;white-space:pre;width:12px;text-align:center;">I</div>
<div style="position:absolute;left:1292.00px;top:355px;font-size:19px;line-height:21px;color:#262626;font-weight:normal;white-space:pre;width:12px;text-align:center;">J</div>
<div style="position:absolute;left:0.70px;top:383px;font-size:19px;line-height:21px;color:#262626;font-weight:normal;white-space:pre;width:9px;text-align:center;">1</div>
<div style="position:absolute;left:0.70px;top:411px;font-size:19px;line-height:21px;color:#217346;font-weight:normal;white-space:pre;width:9px;text-align:center;">2</div>
<div style="position:absolute;left:0.70px;top:441px;font-size:19px;line-height:21px;color:#262626;font-weight:normal;white-space:pre;width:9px;text-align:center;">3</div>
<div style="position:absolute;left:0.70px;top:469px;font-size:19px;line-height:21px;color:#262626;font-weight:normal;white-space:pre;width:9px;text-align:center;">4</div>
<div style="position:absolute;left:0.70px;top:499px;font-size:19px;line-height:21px;color:#262626;font-weight:normal;white-space:pre;width:9px;text-align:center;">5</div>
<div style="position:absolute;left:0.70px;top:527px;font-size:19px;line-height:21px;color:#262626;font-weight:normal;white-space:pre;width:9px;text-align:center;">6</div>
<div style="position:absolute;left:0.70px;top:557px;font-size:19px;line-height:21px;color:#262626;font-weight:normal;white-space:pre;width:9px;text-align:center;">7</div>
<div style="position:absolute;left:0.70px;top:585px;font-size:19px;line-height:21px;color:#262626;font-weight:normal;white-space:pre;width:9px;text-align:center;">8</div>
<div style="position:absolute;left:0.70px;top:615px;font-size:19px;line-height:21px;color:#262626;font-weight:normal;white-space:pre;width:9px;text-align:center;">9</div>
<div style="position:absolute;left:-4.30px;top:643px;font-size:19px;line-height:21px;color:#262626;font-weight:normal;white-space:pre;width:21px;text-align:right;letter-spacing:-0.3px;">10</div>
<div style="position:absolute;left:-4.30px;top:673px;font-size:19px;line-height:21px;color:#262626;font-weight:normal;white-space:pre;width:21px;text-align:right;letter-spacing:-0.3px;">11</div>
<div style="position:absolute;left:-4.30px;top:701px;font-size:19px;line-height:21px;color:#262626;font-weight:normal;white-space:pre;width:21px;text-align:right;letter-spacing:-0.3px;">12</div>
<div style="position:absolute;left:-4.30px;top:731px;font-size:19px;line-height:21px;color:#262626;font-weight:normal;white-space:pre;width:21px;text-align:right;letter-spacing:-0.3px;">13</div>
<div style="position:absolute;left:-4.30px;top:759px;font-size:19px;line-height:21px;color:#262626;font-weight:normal;white-space:pre;width:21px;text-align:right;letter-spacing:-0.3px;">14</div>
<div style="position:absolute;left:-4.30px;top:789px;font-size:19px;line-height:21px;color:#262626;font-weight:normal;white-space:pre;width:21px;text-align:right;letter-spacing:-0.3px;">15</div>
<div style="position:absolute;left:-4.30px;top:817px;font-size:19px;line-height:21px;color:#262626;font-weight:normal;white-space:pre;width:21px;text-align:right;letter-spacing:-0.3px;">16</div>
<div style="position:absolute;left:-4.30px;top:847px;font-size:19px;line-height:21px;color:#262626;font-weight:normal;white-space:pre;width:21px;text-align:right;letter-spacing:-0.3px;">17</div>
<div style="position:absolute;left:28.50px;top:382px;font-size:18.6px;line-height:21px;color:#fff;font-weight:bold;letter-spacing:0.875px;white-space:pre;">Items</div>
<div style="position:absolute;left:124.00px;top:382px;font-size:18.6px;line-height:21px;color:#fff;font-weight:bold;letter-spacing:0.250px;white-space:pre;">CPU</div>
<div style="position:absolute;left:295.50px;top:382px;font-size:18.6px;line-height:21px;color:#fff;font-weight:bold;letter-spacing:0.184px;white-space:pre;">Sales price per unit</div>
<div style="position:absolute;left:501.50px;top:382px;font-size:18.6px;line-height:21px;color:#fff;font-weight:bold;letter-spacing:0.089px;white-space:pre;">Units sold</div>
<div style="position:absolute;left:666.60px;top:382px;font-size:18.6px;line-height:21px;color:#fff;font-weight:bold;letter-spacing:0.529px;white-space:pre;">Profit per unit</div>
<div style="position:absolute;left:827.20px;top:382px;font-size:18.6px;line-height:21px;color:#fff;font-weight:bold;letter-spacing:0.025px;white-space:pre;">Sales rep</div>
<div style="position:absolute;left:29.20px;top:412px;font-size:19.3px;line-height:21px;color:#000;font-weight:normal;letter-spacing:0.537px;white-space:pre;">Product A</div>
<div style="position:absolute;left:234.10px;top:412px;font-size:19.3px;line-height:21px;color:#000;font-weight:normal;letter-spacing:0.175px;white-space:pre;">$2.00</div>
<div style="position:absolute;left:438.60px;top:412px;font-size:19.3px;line-height:21px;color:#000;font-weight:normal;letter-spacing:0.175px;white-space:pre;">$2.75</div>
<div style="position:absolute;left:625.75px;top:412px;font-size:19.3px;line-height:21px;color:#000;font-weight:normal;letter-spacing:0.775px;white-space:pre;">235</div>
<div style="position:absolute;left:764.50px;top:412px;font-size:19.3px;line-height:21px;color:#000;font-weight:normal;letter-spacing:0.175px;white-space:pre;">$0.75</div>
<div style="position:absolute;left:827.20px;top:412px;font-size:19.3px;line-height:21px;color:#000;font-weight:normal;letter-spacing:-0.075px;white-space:pre;">Steve</div>
<div style="position:absolute;left:29.20px;top:441px;font-size:19.3px;line-height:21px;color:#000;font-weight:normal;letter-spacing:0.537px;white-space:pre;">Product B</div>
<div style="position:absolute;left:234.10px;top:441px;font-size:19.3px;line-height:21px;color:#000;font-weight:normal;letter-spacing:0.175px;white-space:pre;">$2.50</div>
<div style="position:absolute;left:438.60px;top:441px;font-size:19.3px;line-height:21px;color:#000;font-weight:normal;letter-spacing:0.175px;white-space:pre;">$3.15</div>
<div style="position:absolute;left:625.75px;top:441px;font-size:19.3px;line-height:21px;color:#000;font-weight:normal;letter-spacing:0.775px;white-space:pre;">152</div>
<div style="position:absolute;left:764.50px;top:441px;font-size:19.3px;line-height:21px;color:#000;font-weight:normal;letter-spacing:0.175px;white-space:pre;">$0.65</div>
<div style="position:absolute;left:828.20px;top:441px;font-size:19.3px;line-height:21px;color:#000;font-weight:normal;letter-spacing:0.175px;white-space:pre;">Janet</div>
<div style="position:absolute;left:29.20px;top:470px;font-size:19.3px;line-height:21px;color:#000;font-weight:normal;letter-spacing:0.412px;white-space:pre;">Product C</div>
<div style="position:absolute;left:234.10px;top:470px;font-size:19.3px;line-height:21px;color:#000;font-weight:normal;letter-spacing:0.175px;white-space:pre;">$3.75</div>
<div style="position:absolute;left:438.60px;top:470px;font-size:19.3px;line-height:21px;color:#000;font-weight:normal;letter-spacing:0.175px;white-space:pre;">$5.50</div>
<div style="position:absolute;left:636.50px;top:470px;font-size:19.3px;line-height:21px;color:#000;font-weight:normal;letter-spacing:1.800px;white-space:pre;">34</div>
<div style="position:absolute;left:764.50px;top:470px;font-size:19.3px;line-height:21px;color:#000;font-weight:normal;letter-spacing:0.175px;white-space:pre;">$1.75</div>
<div style="position:absolute;left:828.20px;top:470px;font-size:19.3px;line-height:21px;color:#000;font-weight:normal;letter-spacing:0.175px;white-space:pre;">Janet</div>
<div style="position:absolute;left:29.20px;top:499px;font-size:19.3px;line-height:21px;color:#000;font-weight:normal;letter-spacing:0.412px;white-space:pre;">Product D</div>
<div style="position:absolute;left:234.10px;top:499px;font-size:19.3px;line-height:21px;color:#000;font-weight:normal;letter-spacing:0.175px;white-space:pre;">$4.20</div>
<div style="position:absolute;left:438.60px;top:499px;font-size:19.3px;line-height:21px;color:#000;font-weight:normal;letter-spacing:0.175px;white-space:pre;">$6.30</div>
<div style="position:absolute;left:625.75px;top:499px;font-size:19.3px;line-height:21px;color:#000;font-weight:normal;letter-spacing:0.775px;white-space:pre;">267</div>
<div style="position:absolute;left:764.50px;top:499px;font-size:19.3px;line-height:21px;color:#000;font-weight:normal;letter-spacing:0.175px;white-space:pre;">$2.10</div>
<div style="position:absolute;left:827.20px;top:499px;font-size:19.3px;line-height:21px;color:#000;font-weight:normal;letter-spacing:-0.075px;white-space:pre;">Steve</div>
<div style="position:absolute;left:29.20px;top:528px;font-size:19.3px;line-height:21px;color:#000;font-weight:normal;letter-spacing:0.537px;white-space:pre;">Product E</div>
<div style="position:absolute;left:261.00px;top:528px;font-size:19.3px;line-height:21px;color:#000;font-weight:normal;letter-spacing:0.800px;white-space:pre;">$5</div>
<div style="position:absolute;left:438.60px;top:528px;font-size:19.3px;line-height:21px;color:#000;font-weight:normal;letter-spacing:0.175px;white-space:pre;">$7.50</div>
<div style="position:absolute;left:625.75px;top:528px;font-size:19.3px;line-height:21px;color:#000;font-weight:normal;letter-spacing:1.775px;white-space:pre;">116</div>
<div style="position:absolute;left:764.50px;top:528px;font-size:19.3px;line-height:21px;color:#000;font-weight:normal;letter-spacing:0.175px;white-space:pre;">$2.50</div>
<div style="position:absolute;left:827.20px;top:528px;font-size:19.3px;line-height:21px;color:#000;font-weight:normal;letter-spacing:-0.075px;white-space:pre;">Steve</div>
<div style="position:absolute;left:76.50px;top:240px;font-size:17.2px;line-height:20px;color:#444;font-weight:bold;letter-spacing:0.425px;white-space:pre;z-index:11;">From Text/CSV</div>
<div style="position:absolute;left:76.30px;top:275px;font-size:17.4px;line-height:20px;color:#605e5c;font-weight:normal;letter-spacing:0.509px;white-space:pre;z-index:11;">Import data from a text,</div>
<div style="position:absolute;left:76.30px;top:299px;font-size:17.4px;line-height:20px;color:#605e5c;font-weight:normal;letter-spacing:0.270px;white-space:pre;z-index:11;">comma-separated value or</div>
<div style="position:absolute;left:77.30px;top:324px;font-size:17.4px;line-height:20px;color:#605e5c;font-weight:normal;letter-spacing:0.290px;white-space:pre;z-index:11;">formatted text (space delimited)</div>
<div style="position:absolute;left:77.50px;top:348px;font-size:17.4px;line-height:20px;color:#605e5c;font-weight:normal;letter-spacing:0.050px;white-space:pre;z-index:11;">file.</div>
</body></html>
